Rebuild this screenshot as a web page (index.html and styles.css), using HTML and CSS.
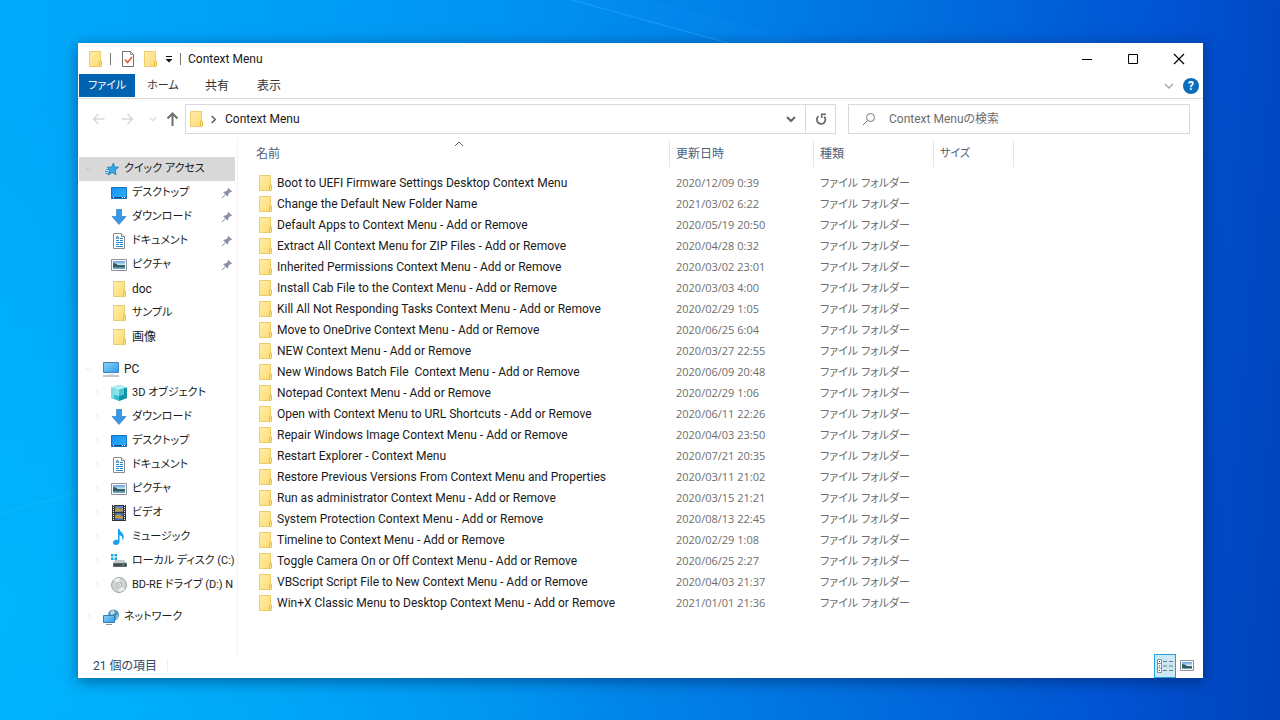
FILE: index.html
```html
<!DOCTYPE html>
<html lang="ja">
<head>
<meta charset="utf-8">
<meta name="viewport" content="width=device-width, initial-scale=1">
<title>Context Menu</title>
<link rel="stylesheet" href="styles.css">
</head>
<body>
<svg class="sprite" aria-hidden="true">
  <defs>
    <linearGradient id="g-folder" x1="0" y1="0" x2="1" y2="1"><stop offset="0" stop-color="#ffedac"/><stop offset="1" stop-color="#ffdc71"/></linearGradient>
    <linearGradient id="g-blue" x1="0" y1="0" x2="1" y2="1"><stop offset="0" stop-color="#1590f5"/><stop offset="1" stop-color="#2db0ff"/></linearGradient>
    <linearGradient id="g-screen" x1="0" y1="0" x2="1" y2="1"><stop offset="0" stop-color="#8ed2fb"/><stop offset="1" stop-color="#2f9cea"/></linearGradient>
    <linearGradient id="g-sky" x1="0" y1="0" x2="0" y2="1"><stop offset="0" stop-color="#5b9be0"/><stop offset=".5" stop-color="#d9edf9"/><stop offset=".55" stop-color="#3f6f6a"/><stop offset="1" stop-color="#78aecb"/></linearGradient>
  </defs>
  <symbol id="folder" viewBox="0 0 16 16"><path d="M2.500 .5h11v15h-11z" fill="url(#g-folder)" stroke="#ebcd6c"/><path d="M12.500 15.500v-5q0-.5.500-.5h1q.5 0 .5.500v4q0 1-1 1z" fill="#ffe68f" stroke="#e3bb45"/></symbol>
  <symbol id="desktop" viewBox="0 0 16 16"><path d="M.5 2.500h15v11H.5z" fill="url(#g-blue)" stroke="#1574b8"/><path d="M1 12.500h14" stroke="#0c4a80"/><path d="M2 12.500h1M11 12.500h1M13 12.500h1" stroke="#fff"/></symbol>
  <symbol id="download" viewBox="0 0 16 16"><path d="M5.500 .5h5v7h4.500l-7 8-7-8h4.500z" fill="#3c97e4" stroke="#2b7fca" stroke-width=".7"/></symbol>
  <symbol id="document" viewBox="0 0 16 16"><path d="M2.500 .5h8l3 3v12h-11z" fill="#fff" stroke="#8c8c8c"/><path d="M10.500 .5v3h3" fill="#eee" stroke="#8c8c8c"/><path d="M5 6l1.500-3L8 6M5.500 5h2M9 5.500h3M5 7.500h3M9 7.500h3M5 9.500h7M5 11.500h3M9 11.500h3M5 13.500h7" fill="none" stroke="#2a86cb"/></symbol>
  <symbol id="picture" viewBox="0 0 16 16"><path d="M.5 2.500h15v11H.5z" fill="#fff" stroke="#8b949b"/><path d="M2 4h12v8H2z" fill="url(#g-sky)"/><path d="M2 6q3 0 5 2l7 1v1H2z" fill="#315f60"/></symbol>
  <symbol id="star" viewBox="0 0 16 16"><path d="M10.500 2l1 4 4 .3-3.300 2.700.8 4.800-3.700-2.300-4.300 2.500 1.600-4.500L4.500 6l4 .2z" fill="#32a7ed" stroke="#1777b5" stroke-width=".8"/><path d="M3 8.500h3M2 10.500h3M2.500 12.500h2M4 6.500h2" stroke="#2b93d7"/></symbol>
  <symbol id="pc" viewBox="0 0 16 16"><path d="M.5 1.500h15v10H.5z" fill="url(#g-screen)" stroke="#3986b7"/><path d="M5 13.500h6" stroke="#dbe3e8"/><path d="M0 15h16" stroke="#7d929f"/></symbol>
  <symbol id="cube" viewBox="0 0 16 16"><path d="M0 2.500L8 0l8 2.500v10.500L8 16l-8-3z" fill="#39bed0"/><path d="M0 2.500L8 0l8 2.500L8 5z" fill="#b5f0f5"/><path d="M0 2.500L3 3.500V14l-3-1z" fill="#7fdde8"/><path d="M8 5l8-2.500v10.500L8 16z" fill="#1594a8"/><path d="M3 3.500L8 5v6l-5-1.500z" fill="#8be3ec"/><path d="M8 5l5-1.500v6L8 11z" fill="#4fc6d4"/></symbol>
  <symbol id="video" viewBox="0 0 16 16"><path d="M1 0h14v16H1z" fill="#333"/><path d="M4 1h8v6H4z" fill="#5288c5"/><path d="M4 8h8v7H4z" fill="#3b70c0"/><path d="M4 5l3-3 2 3 3-2v3l-8 1zM4 11l4-2 4 3v2l-8-1z" fill="#c79b3c"/><path d="M2.500 0v16M13.500 0v16" stroke="#f5f5f5" stroke-dasharray="1 1"/></symbol>
  <symbol id="music" viewBox="0 0 16 16"><path d="M7 0h1.500c.2 3 5 4.400 4.200 8.700-.2 1.200-.8 2-1.500 2.700.7-3.200-.6-4.500-2.700-5.400V13c0 1.600-1.600 3-3.600 3S2 15 2 13.600s1.400-2.900 3.300-2.900c.7 0 1.300.2 1.700.4z" fill="#18a0f0"/></symbol>
  <symbol id="drive" viewBox="0 0 16 16"><path d="M0 1h2.500v2.500H0zM3.500 1H6v2.500H3.500zM0 4.500h2.500V7H0zM3.500 4.500H6V7H3.500z" fill="#16a8df"/><path d="M4 7h9l3 3H2z" fill="#c3c7ca"/><path d="M2.500 10.500h13v3h-13z" fill="#444b50" stroke="#59646b"/><path d="M11 12h2" stroke="#42e46b"/></symbol>
  <symbol id="disc" viewBox="0 0 16 16"><circle cx="8" cy="8" r="7.500" fill="#d0d3d3" stroke="#9fa5a5"/><path d="M8 8L3 2.500Q6 .5 9 1zM8 8l6 4q-3 3-6 3z" fill="#edf0ef"/><circle cx="8" cy="8" r="2.500" fill="#eee" stroke="#a8adad"/><circle cx="8" cy="8" r=".8" fill="#999"/></symbol>
  <symbol id="network" viewBox="0 0 16 16"><circle cx="10.500" cy="6" r="5.500" fill="#4f93bd"/><path d="M8 2l3-1 1 3-3 2-2-1z" fill="#b5dbe9"/><path d="M13 7l2-2v4l-2 1z" fill="#8fc4dc"/><path d="M.5 6.500h11v7H.5z" fill="url(#g-screen)" stroke="#2c7eb6"/><path d="M3 15.500h6" stroke="#8599a5"/></symbol>
  <symbol id="pin" viewBox="0 0 12 12"><path d="M7.500 1L11 4.500l-1 .7H9L7.300 7v1.500l-1 1-4-4 1-1h1.500L6.500 3V2z" fill="#8793a0"/><path d="M4.500 7.500L1 11" stroke="#8793a0"/></symbol>
  <symbol id="check" viewBox="0 0 14 16"><path d="M1.500 .5h8l3 3v12h-11z" fill="#fff" stroke="#737373"/><path d="M9.500 .5v3h3" fill="none" stroke="#999"/><path d="M4 8.500l2.500 3 4.500-5.500" fill="none" stroke="#e3602c" stroke-width="1.700"/></symbol>
  <symbol id="down" viewBox="0 0 10 10"><path d="M1 3l4 4 4-4" fill="none" stroke="currentColor" stroke-width="1.500"/></symbol>
  <symbol id="drop" viewBox="0 0 10 10"><path d="M1 3l4 4 4-4" fill="none" stroke="currentColor" stroke-width="2"/></symbol>
  <symbol id="right" viewBox="0 0 10 10"><path d="M3 1l4 4-4 4" fill="none" stroke="currentColor" stroke-width="1.500"/></symbol>
  <symbol id="back" viewBox="0 0 14 14"><path d="M13 7H1.500M7 2L2 7l5 5" fill="none" stroke="currentColor" stroke-width="1.500"/></symbol>
  <symbol id="forward" viewBox="0 0 14 14"><path d="M1 7h11.500M7 2l5 5-5 5" fill="none" stroke="currentColor" stroke-width="1.500"/></symbol>
</svg>
<svg class="beams" viewBox="0 0 1280 720" preserveAspectRatio="none" aria-hidden="true">
  <path d="M572 0L728 43H820L650 0z" fill="#1690ff" opacity=".12"/>
  <path d="M572 0L728 43" stroke="#46b4ff" opacity=".45"/>
  <path d="M0 514L78 492" stroke="#3ac5ff" opacity=".3"/>
</svg>

<main class="window">
  <header class="titlebar">
    <svg class="icon"><use href="#folder"/></svg>
    <span class="rule"></span>
    <button class="quick" aria-label="プロパティ"><svg class="sheet"><use href="#check"/></svg></button>
    <button class="quick" aria-label="新しいフォルダー"><svg class="icon"><use href="#folder"/></svg></button>
    <button class="customize" aria-label="クイック アクセス ツール バーのカスタマイズ"><svg viewBox="0 0 8 8"><path d="M1 1.500h6" stroke="#111"/><path d="M0.500 4h7L4 7.500z" fill="#111"/></svg></button>
    <span class="rule"></span>
    <h1>Context Menu</h1>
    <div class="controls">
      <button aria-label="最小化"><svg viewBox="0 0 12 12"><path d="M1 6.500h10" stroke="#000"/></svg></button>
      <button aria-label="最大化"><svg viewBox="0 0 12 12"><path d="M1.500 1.500h9v9h-9z" fill="none" stroke="#000"/></svg></button>
      <button aria-label="閉じる"><svg viewBox="0 0 12 12"><path d="M1 1l10 10M11 1L1 11" stroke="#000" stroke-width="1.200"/></svg></button>
    </div>
  </header>

  <nav class="ribbon">
    <button class="file kana">ファイル</button>
    <button class="home kana">ホーム</button>
    <button>共有</button>
    <button>表示</button>
    <span class="spacer"></span>
    <button class="expand" aria-label="リボンの展開"><svg class="chev"><use href="#down"/></svg></button>
    <button class="help" aria-label="ヘルプ">?</button>
  </nav>

  <div class="toolbar">
    <div class="history">
      <button aria-label="戻る" disabled><svg class="arrow"><use href="#back"/></svg></button>
      <button aria-label="進む" disabled><svg class="arrow"><use href="#forward"/></svg></button>
      <button class="recent" aria-label="最近表示した場所" disabled><svg><use href="#down"/></svg></button>
      <button class="up" aria-label="上へ"><svg class="arrow" viewBox="0 0 14 14"><path d="M7 14V1.500M2 6.500l5-5 5 5" fill="none" stroke="#707070" stroke-width="2"/></svg></button>
    </div>
    <div class="address">
      <svg class="icon"><use href="#folder"/></svg>
      <svg class="sep"><use href="#right"/></svg>
      <button class="crumb">Context Menu</button>
      <button class="drop" aria-label="以前の場所"><svg class="chev"><use href="#drop"/></svg></button>
      <button class="refresh" aria-label="最新の情報に更新"><svg viewBox="0 0 12 12"><path d="M9.200 3.600A4.300 4.300 0 1 1 3.500 3.200" fill="none" stroke="#666" stroke-width="1.700"/><path d="M6.700 5V1.300H11" fill="none" stroke="#666" stroke-width="1.600"/></svg></button>
    </div>
    <label class="search">
      <svg viewBox="0 0 14 14"><circle cx="8.500" cy="5.500" r="4" fill="none" stroke="#777"/><path d="M5.500 8.500L1 13" stroke="#777"/></svg>
      <input type="search" placeholder="Context Menuの検索" aria-label="Context Menuの検索">
    </label>
  </div>

  <div class="body">
    <nav class="tree" aria-label="ナビゲーション">
      <ul>
        <li><button class="node selected"><svg class="twist"><use href="#down"/></svg><svg class="icon"><use href="#star"/></svg><span>クイック アクセス</span></button></li>
        <li><button class="node child"><svg class="icon"><use href="#desktop"/></svg><span>デスクトップ</span><svg class="pin"><use href="#pin"/></svg></button></li>
        <li><button class="node child"><svg class="icon"><use href="#download"/></svg><span>ダウンロード</span><svg class="pin"><use href="#pin"/></svg></button></li>
        <li><button class="node child"><svg class="icon"><use href="#document"/></svg><span>ドキュメント</span><svg class="pin"><use href="#pin"/></svg></button></li>
        <li><button class="node child"><svg class="icon"><use href="#picture"/></svg><span>ピクチャ</span><svg class="pin"><use href="#pin"/></svg></button></li>
        <li><button class="node child latin"><svg class="icon"><use href="#folder"/></svg><span>doc</span></button></li>
        <li><button class="node child"><svg class="icon"><use href="#folder"/></svg><span>サンプル</span></button></li>
        <li><button class="node child latin"><svg class="icon"><use href="#folder"/></svg><span>画像</span></button></li>
      </ul>
      <ul>
        <li><button class="node latin"><svg class="twist"><use href="#down"/></svg><svg class="icon"><use href="#pc"/></svg><span>PC</span></button></li>
        <li><button class="node sub"><svg class="twist"><use href="#right"/></svg><svg class="icon"><use href="#cube"/></svg><span>3D オブジェクト</span></button></li>
        <li><button class="node sub"><svg class="twist"><use href="#right"/></svg><svg class="icon"><use href="#download"/></svg><span>ダウンロード</span></button></li>
        <li><button class="node sub"><svg class="twist"><use href="#right"/></svg><svg class="icon"><use href="#desktop"/></svg><span>デスクトップ</span></button></li>
        <li><button class="node sub"><svg class="twist"><use href="#right"/></svg><svg class="icon"><use href="#document"/></svg><span>ドキュメント</span></button></li>
        <li><button class="node sub"><svg class="twist"><use href="#right"/></svg><svg class="icon"><use href="#picture"/></svg><span>ピクチャ</span></button></li>
        <li><button class="node sub"><svg class="twist"><use href="#right"/></svg><svg class="icon"><use href="#video"/></svg><span>ビデオ</span></button></li>
        <li><button class="node sub"><svg class="twist"><use href="#right"/></svg><svg class="icon"><use href="#music"/></svg><span>ミュージック</span></button></li>
        <li><button class="node sub"><svg class="twist"><use href="#right"/></svg><svg class="icon"><use href="#drive"/></svg><span>ローカル ディスク (C:)</span></button></li>
        <li><button class="node sub"><svg class="twist"><use href="#right"/></svg><svg class="icon"><use href="#disc"/></svg><span>BD-RE ドライブ (D:) N</span></button></li>
      </ul>
      <ul>
        <li><button class="node"><svg class="twist"><use href="#right"/></svg><svg class="icon"><use href="#network"/></svg><span>ネットワーク</span></button></li>
      </ul>
    </nav>

    <section class="content">
      <table>
        <colgroup><col class="c-name"><col class="c-date"><col class="c-type"><col class="c-size"><col></colgroup>
        <thead>
          <tr><th scope="col"><div class="head">名前<svg class="sort" viewBox="0 0 10 6"><path d="M1 5l4-4 4 4" fill="none" stroke="#666"/></svg></div></th><th scope="col"><div class="head">更新日時</div></th><th scope="col"><div class="head">種類</div></th><th scope="col"><div class="head kana">サイズ</div></th><td></td></tr>
        </thead>
        <tbody>
          <tr><td><div class="name"><svg class="icon"><use href="#folder"/></svg>Boot to UEFI Firmware Settings Desktop Context Menu</div></td><td>2020/12/09 0:39</td><td>ファイル フォルダー</td><td></td><td></td></tr>
          <tr><td><div class="name"><svg class="icon"><use href="#folder"/></svg>Change the Default New Folder Name</div></td><td>2021/03/02 6:22</td><td>ファイル フォルダー</td><td></td><td></td></tr>
          <tr><td><div class="name"><svg class="icon"><use href="#folder"/></svg>Default Apps to Context Menu - Add or Remove</div></td><td>2020/05/19 20:50</td><td>ファイル フォルダー</td><td></td><td></td></tr>
          <tr><td><div class="name"><svg class="icon"><use href="#folder"/></svg>Extract All Context Menu for ZIP Files - Add or Remove</div></td><td>2020/04/28 0:32</td><td>ファイル フォルダー</td><td></td><td></td></tr>
          <tr><td><div class="name"><svg class="icon"><use href="#folder"/></svg>Inherited Permissions Context Menu - Add or Remove</div></td><td>2020/03/02 23:01</td><td>ファイル フォルダー</td><td></td><td></td></tr>
          <tr><td><div class="name"><svg class="icon"><use href="#folder"/></svg>Install Cab File to the Context Menu - Add or Remove</div></td><td>2020/03/03 4:00</td><td>ファイル フォルダー</td><td></td><td></td></tr>
          <tr><td><div class="name"><svg class="icon"><use href="#folder"/></svg>Kill All Not Responding Tasks Context Menu - Add or Remove</div></td><td>2020/02/29 1:05</td><td>ファイル フォルダー</td><td></td><td></td></tr>
          <tr><td><div class="name"><svg class="icon"><use href="#folder"/></svg>Move to OneDrive Context Menu - Add or Remove</div></td><td>2020/06/25 6:04</td><td>ファイル フォルダー</td><td></td><td></td></tr>
          <tr><td><div class="name"><svg class="icon"><use href="#folder"/></svg>NEW Context Menu - Add or Remove</div></td><td>2020/03/27 22:55</td><td>ファイル フォルダー</td><td></td><td></td></tr>
          <tr><td><div class="name"><svg class="icon"><use href="#folder"/></svg>New Windows Batch File  Context Menu - Add or Remove</div></td><td>2020/06/09 20:48</td><td>ファイル フォルダー</td><td></td><td></td></tr>
          <tr><td><div class="name"><svg class="icon"><use href="#folder"/></svg>Notepad Context Menu - Add or Remove</div></td><td>2020/02/29 1:06</td><td>ファイル フォルダー</td><td></td><td></td></tr>
          <tr><td><div class="name"><svg class="icon"><use href="#folder"/></svg>Open with Context Menu to URL Shortcuts - Add or Remove</div></td><td>2020/06/11 22:26</td><td>ファイル フォルダー</td><td></td><td></td></tr>
          <tr><td><div class="name"><svg class="icon"><use href="#folder"/></svg>Repair Windows Image Context Menu - Add or Remove</div></td><td>2020/04/03 23:50</td><td>ファイル フォルダー</td><td></td><td></td></tr>
          <tr><td><div class="name"><svg class="icon"><use href="#folder"/></svg>Restart Explorer - Context Menu</div></td><td>2020/07/21 20:35</td><td>ファイル フォルダー</td><td></td><td></td></tr>
          <tr><td><div class="name"><svg class="icon"><use href="#folder"/></svg>Restore Previous Versions From Context Menu and Properties</div></td><td>2020/03/11 21:02</td><td>ファイル フォルダー</td><td></td><td></td></tr>
          <tr><td><div class="name"><svg class="icon"><use href="#folder"/></svg>Run as administrator Context Menu - Add or Remove</div></td><td>2020/03/15 21:21</td><td>ファイル フォルダー</td><td></td><td></td></tr>
          <tr><td><div class="name"><svg class="icon"><use href="#folder"/></svg>System Protection Context Menu - Add or Remove</div></td><td>2020/08/13 22:45</td><td>ファイル フォルダー</td><td></td><td></td></tr>
          <tr><td><div class="name"><svg class="icon"><use href="#folder"/></svg>Timeline to Context Menu - Add or Remove</div></td><td>2020/02/29 1:08</td><td>ファイル フォルダー</td><td></td><td></td></tr>
          <tr><td><div class="name"><svg class="icon"><use href="#folder"/></svg>Toggle Camera On or Off Context Menu - Add or Remove</div></td><td>2020/06/25 2:27</td><td>ファイル フォルダー</td><td></td><td></td></tr>
          <tr><td><div class="name"><svg class="icon"><use href="#folder"/></svg>VBScript Script File to New Context Menu - Add or Remove</div></td><td>2020/04/03 21:37</td><td>ファイル フォルダー</td><td></td><td></td></tr>
          <tr><td><div class="name"><svg class="icon"><use href="#folder"/></svg>Win+X Classic Menu to Desktop Context Menu - Add or Remove</div></td><td>2021/01/01 21:36</td><td>ファイル フォルダー</td><td></td><td></td></tr>
        </tbody>
      </table>
    </section>
  </div>

  <footer class="status">
    <span class="count">21 個の項目</span>
    <span class="spacer"></span>
    <button class="view active" aria-label="詳細"><svg viewBox="0 0 16 14"><path d="M.5 .5h4v13h-4zM.5 4.500h4M.5 9h4" fill="#fff" stroke="#8a8f92"/><path d="M2 2.500h1M2 7h1M2 11.500h1" stroke="#333"/><path d="M6 2.500h4M12 2.500h4M6 7h4M12 7h4M6 11.500h4M12 11.500h4" stroke="#777"/></svg></button>
    <button class="view" aria-label="大アイコン"><svg viewBox="0 0 14 12"><path d="M.5 .5h13v10H.5z" fill="#fff" stroke="#8b8f93"/><path d="M2 2h10v7H2z" fill="url(#g-sky)"/><path d="M2 4q3 0 5 2l5 1v1H2z" fill="#315f60"/></svg></button>
  </footer>
</main>
</body>
</html>
```
FILE: styles.css
```css
* {
  box-sizing: border-box;
}

body {
  margin: 0;
  min-height: 100vh;
  padding: 43px 77px 42px 78px;
  display: flex;
  position: relative;
  font-family: Roboto, "Noto Sans CJK JP", sans-serif;
  font-size: 12px;
  line-height: 20px;
  font-feature-settings: "palt";
  color: #1a1a1a;
  background:
    radial-gradient(ellipse 50% 70% at 0% 85%, rgba(0, 190, 255, 0.6), rgba(0, 190, 255, 0)),
    linear-gradient(95deg, #00aafa 0%, #00a2f8 16%, #0090ef 42%, #0072e0 66%, #0052d2 88%, #0043ba 100%);
}

button,
input {
  margin: 0;
  padding: 0;
  border: 0;
  background: none;
  color: inherit;
  font: inherit;
  font-feature-settings: inherit;
}

svg {
  display: block;
  flex: none;
}

.sprite {
  position: absolute;
  width: 0;
  height: 0;
}

.beams {
  position: absolute;
  inset: 0;
  width: 100%;
  height: 100%;
}

.window {
  flex: 1;
  min-width: 0;
  position: relative;
  display: flex;
  flex-direction: column;
  background: #fff;
  box-shadow: 0 3px 14px rgba(0, 20, 60, 0.5);
}

.icon {
  width: 16px;
  height: 16px;
}

.spacer {
  flex: 1;
}

.titlebar {
  display: flex;
  align-items: center;
  height: 31px;
  padding: 0 1px 0 9px;
}

.rule {
  width: 1px;
  height: 12px;
  margin: 0 10px 0 7px;
  background: #777;
}

.quick {
  margin-right: 7px;
}

.sheet {
  width: 14px;
  height: 16px;
}

.customize svg {
  width: 8px;
  height: 8px;
}

.titlebar h1 {
  flex: 1;
  margin: 0 0 0 -3px;
  font-size: 12px;
  font-weight: 400;
}

.controls {
  display: flex;
}

.controls button {
  display: grid;
  place-items: center;
  width: 46px;
  height: 30px;
}

.controls svg {
  width: 12px;
  height: 12px;
}

.ribbon {
  display: flex;
  align-items: center;
  height: 25px;
  padding: 0 4px 1px 1px;
  border-bottom: 1px solid #dadbdc;
  color: #333;
}

.ribbon button {
  height: 23px;
  padding: 0 14px;
}

.kana {
  font-size: 11px;
}

.ribbon .file,
.ribbon .home {
  width: 56px;
  padding: 0;
}

.ribbon .file {
  background: #0063b1;
  color: #fff;
}

.ribbon .expand {
  padding: 0 9px;
  color: #aaa;
}

.chev {
  width: 10px;
  height: 10px;
}

.ribbon .help {
  width: 16px;
  height: 16px;
  padding: 0;
  border-radius: 50%;
  background: #0a6cbd;
  color: #fff;
  font-weight: 700;
  line-height: 16px;
}

.toolbar {
  display: flex;
  align-items: center;
  height: 40px;
  padding: 0 13px 0 13px;
}

.history {
  display: flex;
  align-items: center;
  width: 94px;
  gap: 14px;
  color: #d8d8d8;
}

.history .recent svg {
  width: 8px;
  height: 8px;
}

.history .up {
  margin-left: -6px;
}

.arrow {
  width: 15px;
  height: 14px;
}

.address,
.search {
  display: flex;
  align-items: center;
  height: 30px;
  border: 1px solid #d9d9d9;
}

.address {
  flex: 1;
  margin-right: 12px;
  padding-left: 2px;
}

.sep {
  width: 9px;
  height: 9px;
  margin: 0 7px 0 5px;
  color: #555;
}

.crumb {
  flex: 1;
  text-align: left;
}

.drop {
  padding: 0 9px;
  color: #666;
}

.refresh {
  display: grid;
  place-items: center;
  width: 30px;
  height: 28px;
  border-left: 1px solid #d9d9d9;
}

.refresh svg {
  width: 12px;
  height: 12px;
}

.search {
  flex: 0 1 342px;
  gap: 13px;
  padding: 0 13px;
}

.search svg {
  width: 14px;
  height: 14px;
}

.search input {
  flex: 1;
  min-width: 0;
  outline: 0;
}

.search input::placeholder {
  color: #6d6d6d;
  opacity: 1;
}

.body {
  flex: 1;
  display: flex;
}

.tree {
  width: 160px;
  padding: 18px 2px 0 1px;
  border-right: 1px solid #f4f4f4;
}

.tree ul {
  margin: 0 0 8px;
  padding: 0;
  list-style: none;
}

.node {
  display: flex;
  align-items: center;
  width: 100%;
  height: 24px;
  padding-left: 6px;
  gap: 5px;
  font-size: 11px;
  white-space: nowrap;
  text-align: left;
}

.node.latin {
  font-size: 12px;
}

.node span {
  flex: 1;
}

.selected {
  background: #d9d9d9;
}

.sub {
  padding-left: 14px;
}

.child {
  padding-left: 32px;
}

.twist {
  width: 8px;
  height: 8px;
  margin-right: 5px;
  color: #f0f0f0;
}

.selected .twist {
  color: #c8c8c8;
}

.pin {
  width: 12px;
  height: 12px;
  margin-right: 2px;
}

.content {
  flex: 1;
  min-width: 0;
}

table {
  width: 100%;
  table-layout: fixed;
  border-collapse: collapse;
}

.c-name {
  width: 432px;
}

.c-date {
  width: 144px;
}

.c-type {
  width: 120px;
}

.c-size {
  width: 80px;
}

th,
td {
  height: 21px;
  padding: 0 0 0 6px;
  text-align: left;
  font-weight: 400;
  white-space: pre;
  color: #6d6d6d;
}

td {
  font-family: "Open Sans", "Noto Sans CJK JP", sans-serif;
  font-size: 11px;
}

th {
  height: 33px;
  padding: 0 0 4px;
  color: #4c607a;
}

.head {
  position: relative;
  height: 26px;
  padding: 0 6px;
  line-height: 26px;
  border-right: 1px solid #e5e5e5;
}

th:first-child .head {
  padding-left: 18px;
}

.sort {
  position: absolute;
  left: 50%;
  top: 0;
  width: 10px;
  height: 6px;
}

td:first-child {
  padding-left: 19px;
}

.name {
  display: flex;
  align-items: center;
  gap: 4px;
  height: 21px;
  font-family: Roboto, sans-serif;
  font-size: 12px;
  color: #1a1a1a;
}

.status {
  display: flex;
  align-items: center;
  height: 24px;
  padding: 0 5px 0 15px;
  color: #33475f;
}

.count {
  padding-right: 10px;
  line-height: 14px;
  border-right: 1px solid #eee;
}

.view {
  display: grid;
  place-items: center;
  width: 22px;
  height: 24px;
}

.view.active {
  border: 1px solid #26a0da;
  background: #cbe8f6;
}

.view svg {
  width: 14px;
  height: 12px;
}

.view.active svg {
  width: 16px;
  height: 14px;
}
```
